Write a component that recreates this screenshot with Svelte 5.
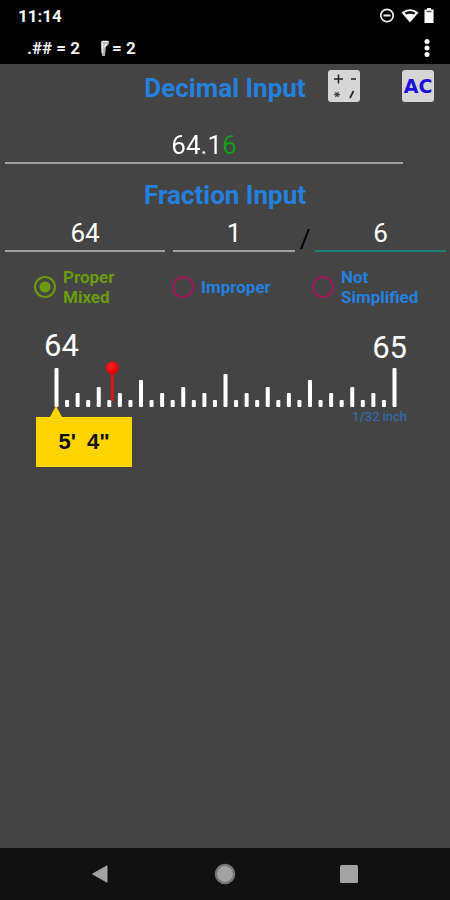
<script>
  let decimal = '64.16';
  let whole = '64';
  let numerator = '1';
  let denominator = '6';
  let mode = 'proper';

  const modes = [
    { id: 'proper', lines: ['Proper', 'Mixed'] },
    { id: 'improper', lines: ['Improper'] },
    { id: 'raw', lines: ['Not', 'Simplified'] }
  ];

  // ruler geometry, in svg units
  const left = 4;
  const span = 338;
  const bottom = 46;

  function tickHeight(i) {
    if (i % 32 === 0) return 39;
    if (i % 16 === 0) return 33;
    if (i % 8 === 0) return 27;
    if (i % 4 === 0) return 20;
    if (i % 2 === 0) return 14;
    return 7;
  }

  const ticks = Array.from({ length: 33 }, (_, i) => ({
    x: left + (i * span) / 32,
    h: tickHeight(i)
  }));

  $: pinX = left + (numerator / denominator) * span;
</script>

<div class="screen">
  <header>
    <div class="status">
      <span class="time">11:14</span>
      <svg width="56" height="18" viewBox="0 0 56 18" aria-hidden="true">
        <circle cx="8" cy="8.500" r="6.200" fill="none" stroke="#eee" stroke-width="1.700" />
        <path d="M4.500 8.500h7" stroke="#eee" stroke-width="2" />
        <path d="M22.500 5.600Q31 -1 39.500 5.600L31 15.500Z" fill="#fff" />
        <path d="M25.500 5.800Q31 2.200 36.500 5.800L35 7.500Q31 5.800 27 7.500Z" fill="#111" />
        <path d="M48 1h4v1.500h2.500v13.500h-9v-13.500h2.500z" fill="#fff" />
        <path d="M47.500 4.500h5" stroke="#555" stroke-width="1.500" />
      </svg>
    </div>
    <div class="appbar">
      <span>.## = 2</span>
      <span class="fraction-digits">
        <svg width="10" height="18" viewBox="0 0 10 18" aria-hidden="true">
          <path d="M1 2h8v3l-3 3-1 9H2L1 9z" fill="#aaa" />
          <path d="M2 2.500h6M2.500 4v10M6.500 4.500L4 8" stroke="#eee" stroke-width="1.500" fill="none" />
        </svg>
        = 2
      </span>
      <button class="menu" aria-label="More options">
        <svg width="6" height="20" viewBox="0 0 6 20">
          <circle cx="3" cy="3.500" r="2.500" />
          <circle cx="3" cy="10" r="2.500" />
          <circle cx="3" cy="16.500" r="2.500" />
        </svg>
      </button>
    </div>
  </header>

  <main>
    <div class="title-row">
      <h2><label for="decimal">Decimal Input</label></h2>
      <div class="tools">
        <button class="key" aria-label="Operators">
          <svg width="32" height="32" viewBox="0 0 32 32">
            <path d="M6 9h9M10.500 4.500v9M23 9h5" stroke="#222" stroke-width="1.500" />
            <path d="M6 24.500h6M7.500 22l3 5M10.500 22l-3 5" stroke="#444" stroke-width="1.300" />
            <path d="M25.500 21L22 28" stroke="#222" stroke-width="1.700" />
          </svg>
        </button>
        <button class="key clear">AC</button>
      </div>
    </div>

    <input id="decimal" class="field decimal" type="text" inputmode="decimal" bind:value={decimal} />

    <h2 class="fraction-title">Fraction Input</h2>
    <div class="fraction-row">
      <input class="field whole" type="text" aria-label="Whole" bind:value={whole} />
      <input class="field numerator" type="text" aria-label="Numerator" bind:value={numerator} />
      <span class="slash">/</span>
      <input class="field denominator" type="text" aria-label="Denominator" bind:value={denominator} />
    </div>

    <div class="modes">
      {#each modes as m}
        <label class:selected={mode === m.id}>
          <input type="radio" name="mode" value={m.id} bind:group={mode} />
          <span>
            {#each m.lines as line}
              <span class="line">{line}</span>
            {/each}
          </span>
        </label>
      {/each}
    </div>

    <section class="ruler">
      <div class="ends">
        <span>64</span>
        <span class="end">65</span>
      </div>
      <svg class="scale" viewBox="0 0 346 46" aria-hidden="true">
        <defs>
          <radialGradient id="pin" cx="0.4" cy="0.35" r="0.6">
            <stop offset="0" stop-color="#ff2020" />
            <stop offset="1" stop-color="#d80000" />
          </radialGradient>
        </defs>
        {#each ticks as t}
          <rect x={t.x - 1.5} y={bottom - t.h} width="4" height={t.h} rx="1" fill="#fff" />
        {/each}
        <rect x={pinX - 1.5} y="9" width="3" height="31" fill="#d81818" />
        <circle cx={pinX} cy="7" r="6.500" fill="url(#pin)" />
      </svg>
      <div class="below">
        <div class="callout">
          <span>5'</span>
          <span>4"</span>
        </div>
        <span class="unit">1/32 inch</span>
      </div>
    </section>
  </main>

  <nav>
    <button aria-label="Back">
      <svg width="22" height="22" viewBox="0 0 22 22">
        <path d="M3.500 11L18 2.800v16.400z" stroke-linejoin="round" stroke="#a0a0a0" />
      </svg>
    </button>
    <button aria-label="Home">
      <svg width="22" height="22" viewBox="0 0 22 22">
        <circle cx="11" cy="11" r="9" stroke="#777" stroke-width="2.500" />
        <circle cx="11" cy="11" r="7.500" />
      </svg>
    </button>
    <button aria-label="Recent apps">
      <svg width="22" height="22" viewBox="0 0 22 22">
        <rect x="2" y="2" width="18" height="18" rx="1.500" />
      </svg>
    </button>
  </nav>
</div>

<style>
  :global(body) {
    margin: 0;
    background: #444;
  }
  .screen {
    display: flex;
    flex-direction: column;
    min-height: 100vh;
    background: #444;
    font-family: Roboto, "Noto Sans", sans-serif;
  }
  button {
    padding: 0;
    border: none;
    background: none;
    cursor: pointer;
  }
  svg {
    display: block;
  }

  header {
    background: #000;
    color: #f2f2f2;
    font-weight: 700;
  }
  .status {
    display: flex;
    align-items: center;
    justify-content: space-between;
    height: 32px;
    padding: 0 15px 0 18px;
    font-size: 17px;
  }
  .appbar {
    display: flex;
    align-items: center;
    height: 32px;
    padding: 0 20px 0 27px;
    font-size: 17px;
    gap: 20px;
  }
  .fraction-digits {
    display: flex;
    align-items: center;
    gap: 2px;
  }
  .menu {
    margin-left: auto;
  }
  .menu svg {
    fill: #fff;
  }

  main {
    flex: 1;
  }
  h2 {
    margin: 0;
    color: #2380de;
    font-size: 26px;
    line-height: 32px;
    font-weight: 700;
    text-align: center;
  }
  .title-row {
    display: grid;
    grid-template-columns: 1fr auto 1fr;
    align-items: center;
    height: 48px;
  }
  .title-row h2 {
    grid-column: 2;
  }
  .tools {
    display: flex;
    justify-content: space-between;
    padding: 0 16px 4px 22px;
  }
  .key {
    width: 32px;
    height: 32px;
    border-radius: 3px;
    background: #d6d6d6;
  }
  .clear {
    color: #1a10d8;
    font: bold 19px "DejaVu Sans", sans-serif;
  }

  .field {
    box-sizing: border-box;
    min-width: 0;
    height: 38px;
    padding: 2px 0 0;
    border: none;
    border-bottom: 2px solid #a0a0a0;
    outline: none;
    background: none;
    color: #fff;
    font: 26px Roboto, sans-serif;
    text-align: center;
  }
  .decimal {
    display: block;
    width: calc(100% - 52px);
    margin: 14px 0 0 5px;
    /* the repeating digit is shown in green */
    background: linear-gradient(to right, #fff calc(50% + 18px), #12a012 calc(50% + 18px));
    background-clip: text;
    color: transparent;
    caret-color: #fff;
  }
  .fraction-title {
    margin-top: 15px;
  }
  .fraction-row {
    display: flex;
    padding: 3px 4px 0 5px;
  }
  .whole {
    flex: 160;
    margin-right: 8px;
  }
  .numerator {
    flex: 122;
  }
  .slash {
    width: 20px;
    color: #000;
    font-size: 26px;
    line-height: 50px;
    height: 38px;
    text-align: center;
  }
  .denominator {
    flex: 131;
    border-bottom-color: #1d8074;
  }

  .modes {
    display: grid;
    grid-template-columns: 138fr 140fr 138fr;
    padding: 15px 0 0 34px;
    color: #2380de;
    font-size: 17px;
    font-weight: 700;
    line-height: 20px;
  }
  .modes label {
    display: flex;
    align-items: center;
    gap: 7px;
    height: 40px;
  }
  .modes .selected {
    color: #6b9b0c;
  }
  .line {
    display: block;
  }
  .modes input {
    appearance: none;
    box-sizing: border-box;
    flex: none;
    width: 22px;
    height: 22px;
    margin: 0;
    border: 2px solid #a0185a;
    border-radius: 50%;
  }
  .modes input:checked {
    border-color: #6b9b0c;
    background: radial-gradient(circle, #6b9b0c 5px, transparent 6px);
  }

  .ends {
    display: flex;
    justify-content: space-between;
    padding: 21px 43px 0 44px;
    color: #fff;
    font-size: 31px;
    line-height: 36px;
  }
  .end {
    padding-top: 2px;
  }
  .ruler .scale {
    width: calc(100% - 104px);
    margin: -5px 0 0 52px;
    overflow: visible;
  }
  .below {
    display: flex;
    align-items: flex-start;
    justify-content: space-between;
    padding: 0 43px 0 36px;
  }
  .callout {
    position: relative;
    display: flex;
    justify-content: center;
    gap: 11px;
    width: 96px;
    margin-top: 10px;
    background: #ffd500;
    color: #111;
    font-family: "Liberation Sans", sans-serif;
    font-size: 22px;
    font-weight: 700;
    line-height: 50px;
  }
  .callout::before {
    content: "";
    position: absolute;
    left: 14px;
    bottom: 100%;
    border: 6px solid transparent;
    border-top: none;
    border-bottom: 11px solid #ffd500;
  }
  .unit {
    color: #2c72ba;
    font-size: 13px;
    line-height: 20px;
  }

  nav {
    display: flex;
    align-items: center;
    justify-content: space-between;
    height: 52px;
    padding: 0 90px 0 89px;
    background: #111;
  }
  nav svg {
    fill: #a3a3a3;
  }
</style>
